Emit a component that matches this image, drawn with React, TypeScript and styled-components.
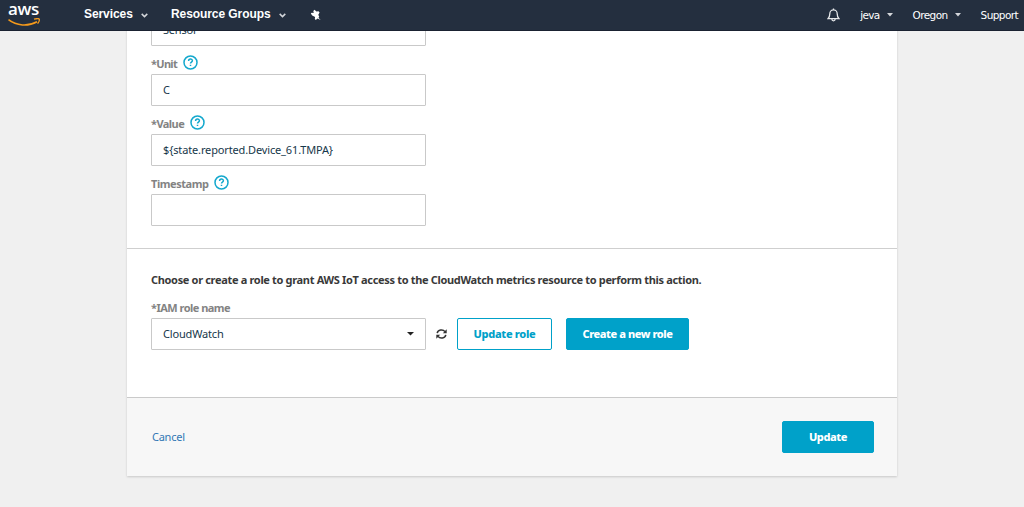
import React from "react";
import styled, { createGlobalStyle } from "styled-components";

const GlobalStyle = createGlobalStyle`
  * { box-sizing: border-box; }
  body {
    margin: 0;
    background: #f0f0f0;
    font-family: "Noto Sans", "Open Sans", sans-serif;
    font-size: 11px;
    color: #16374a;
  }
`;

const Page = styled.div`
  display: flex;
  flex-direction: column;
  height: 507px;
  overflow: hidden;
`;

const TopBar = styled.header`
  display: flex;
  flex: none;
  align-items: center;
  height: 31px;
  padding: 0 6px 0 8px;
  background: #242f3f;
  border-bottom: 1px solid #1a2231;
  color: #fff;
  font-family: "Liberation Sans", Arial, sans-serif;
`;

const Logo = styled.div`
  display: flex;
  flex-direction: column;
  width: 33px;
  height: 25px;
  margin-right: 43px;
`;

const LogoText = styled.span`
  height: 15px;
  font: 600 17px/11px "Open Sans", sans-serif;
  letter-spacing: -0.4px;
`;

const MenuItem = styled.div<{ $width: number }>`
  display: flex;
  align-items: center;
  justify-content: space-between;
  width: ${(p) => p.$width}px;
  padding-bottom: 2px;
  font-size: 12px;
  font-weight: 700;
  letter-spacing: -0.08px;
  white-space: nowrap;

  svg { margin-top: 3px; }
`;

const Menus = styled.nav`
  display: flex;
  align-items: center;
  gap: 23px;
`;

const Account = styled.div`
  display: flex;
  align-items: center;
  margin-left: auto;
  gap: 20px;
  font: 10.5px "DejaVu Sans", sans-serif;
`;

const AccountItem = styled.span<{ $spacing: number }>`
  display: flex;
  align-items: center;
  gap: 7px;
  letter-spacing: ${(p) => p.$spacing}px;
`;

const Body = styled.main`
  flex: 1;
  overflow: hidden;
`;

const Card = styled.div`
  width: 770px;
  margin: -17px 0 0 127px;
  background: #fff;
  box-shadow: 0 1px 2px rgba(0, 0, 0, 0.16);
`;

const Fields = styled.section`
  height: 235px;
  padding: 0 24px;
  border-bottom: 1px solid #cfcfcf;
`;

const Label = styled.label<{ $spacing?: number }>`
  display: flex;
  align-items: center;
  height: 28px;
  padding-top: 7px;
  color: #838383;
  font-weight: 700;
  letter-spacing: ${(p) => p.$spacing ?? 0}px;
`;

const Help = styled.svg`
  margin: -3px 0 0 6px;
`;

const Control = styled.div<{ $spacing?: number }>`
  display: flex;
  align-items: center;
  justify-content: space-between;
  width: 275px;
  height: 32px;
  padding: 0 11px 1px;
  border: 1px solid #c9c9c9;
  border-radius: 1px;
  background: #fff;
  letter-spacing: ${(p) => p.$spacing ?? 0}px;
`;

const RoleSection = styled.section`
  height: 149px;
  padding: 22px 24px 0;
  border-bottom: 1px solid #cacaca;
`;

const Heading = styled.h2`
  height: 18px;
  margin: 0 0 1px;
  color: #393939;
  font-size: 11px;
  line-height: 17px;
  letter-spacing: -0.33px;
  white-space: nowrap;
`;

const RoleRow = styled.div`
  display: flex;
  align-items: center;
`;

const RefreshIcon = styled.svg`
  width: 11px;
  height: 10px;
  margin: 0 10px;
`;

const Button = styled.button<{ $width: number; $outline?: boolean; $spacing?: number }>`
  width: ${(p) => p.$width}px;
  height: 32px;
  padding: 0 0 1px;
  border: 1px solid #00a1c9;
  border-radius: 2px;
  background: ${(p) => (p.$outline ? "#fff" : "#00a1c9")};
  color: ${(p) => (p.$outline ? "#00a1c9" : "#fff")};
  font: 800 11px "Noto Sans", sans-serif;
  letter-spacing: ${(p) => p.$spacing ?? 0}px;
  white-space: nowrap;
`;

const CreateButton = styled(Button)`
  margin-left: 14px;
`;

const Footer = styled.footer`
  display: flex;
  align-items: center;
  justify-content: space-between;
  height: 78px;
  padding: 0 23px 0 25px;
  background: #f7f7f7;
`;

const Cancel = styled.a`
  padding-bottom: 2px;
  color: #3277b5;
  letter-spacing: -0.25px;
`;

const HelpIcon = () => (
  <Help width="15" height="15" viewBox="0 0 15 15" fill="none" stroke="#14a8cd">
    <circle cx="7.5" cy="7.5" r="6.5" strokeWidth="1.5" />
    <path d="M5.6 5.9C5.6 3.5 9.4 3.6 9.4 5.7c0 1.4-1.9 1.4-1.9 2.8M7.5 9.8v1.3" strokeWidth="1.5" />
  </Help>
);

const Chevron = () => (
  <svg width="7" height="5" viewBox="0 0 7 5" fill="none" stroke="#d3d6da" strokeWidth="1.5">
    <path d="M.7 .9 3.5 3.6 6.3 .9" />
  </svg>
);

const Caret = ({ color = "#d3d6da", width = 6 }: { color?: string; width?: number }) => (
  <svg width={width} height="4" viewBox="0 0 6 4" preserveAspectRatio="none">
    <path d="M0 0h6L3 3.6z" fill={color} />
  </svg>
);

const fields = [
  { label: "*Unit", value: "C", labelSpacing: -0.7, spacing: 0 },
  { label: "*Value", value: "${state.reported.Device_61.TMPA}", labelSpacing: -0.55, spacing: -0.14 },
  { label: "Timestamp", value: "", labelSpacing: -0.45, spacing: 0 },
];

export default function App() {
  return (
    <Page>
      <GlobalStyle />
      <TopBar>
        <Logo>
          <LogoText>aws</LogoText>
          <svg width="33" height="9" viewBox="0 0 33 9" fill="none" stroke="#f59a1b" strokeWidth="1.6">
            <path d="M.5 1.7C8.5 8 20 8.7 29 3.7" />
            <path d="M26 1.2c2.4-.7 4.6-.8 5.1-.2.5.7-.2 3-1.5 4.7" strokeWidth="1.3" />
          </svg>
        </Logo>
        <Menus>
          <MenuItem $width={64}>Services <Chevron /></MenuItem>
          <MenuItem $width={115}>Resource Groups <Chevron /></MenuItem>
          <svg width="13" height="12" viewBox="0 0 12 12" fill="#fff">
            <path d="M5 .8 6.9 2.6 9 2.3l1.1 1.3L8.8 5.7l1 2.3-.9.7L11.2 11 8 9.4 6.3 10.9 5.3 10l.3-2L2.7 6.5 1.3 4.6l.9-.9 2 .2L3.8 2z" />
          </svg>
        </Menus>
        <Account>
          <svg width="13" height="14" viewBox="0 0 13 14" fill="none" stroke="#e5e7e9" strokeWidth="1.3">
            <path d="M6.5.5v1.3M1 10.7c1.5-1.3 1.8-2.5 1.8-5 0-5 7.4-5 7.4 0 0 2.5.3 3.7 1.8 5zM4.8 11c.2 2.4 3.2 2.4 3.4 0" />
          </svg>
          <AccountItem $spacing={-0.7}>jeva <Caret /></AccountItem>
          <AccountItem $spacing={-0.6}>Oregon <Caret /></AccountItem>
          <AccountItem $spacing={-0.58}>Support</AccountItem>
        </Account>
      </TopBar>
      <Body>
        <Card>
          <Fields>
            <Control $spacing={-0.2}>Sensor</Control>
            {fields.map((f) => (
              <React.Fragment key={f.label}>
                <Label $spacing={f.labelSpacing}>{f.label}<HelpIcon /></Label>
                <Control $spacing={f.spacing}>{f.value}</Control>
              </React.Fragment>
            ))}
          </Fields>
          <RoleSection>
            <Heading>Choose or create a role to grant AWS IoT access to the CloudWatch metrics resource to perform this action.</Heading>
            <Label $spacing={-0.52}>*IAM role name</Label>
            <RoleRow>
              <Control $spacing={-0.17}>CloudWatch <Caret color="#222" width={7} /></Control>
              <RefreshIcon viewBox="0 0 11 10" fill="none" stroke="#333" strokeWidth="1.5">
                <path d="M1.2 4.1C1.9.6 6.8-.2 9 2.6M9.8 5.9C9.1 9.4 4.2 10.2 2 7.4" />
                <path d="M10.7.3v3.9H6.8zM.3 9.7V5.8h3.9z" fill="#333" stroke="none" />
              </RefreshIcon>
              <Button $width={95} $outline $spacing={-0.32}>Update role</Button>
              <CreateButton $width={123} $spacing={-0.43}>Create a new role</CreateButton>
            </RoleRow>
          </RoleSection>
          <Footer>
            <Cancel>Cancel</Cancel>
            <Button $width={92} $spacing={-0.4}>Update</Button>
          </Footer>
        </Card>
      </Body>
    </Page>
  );
}
